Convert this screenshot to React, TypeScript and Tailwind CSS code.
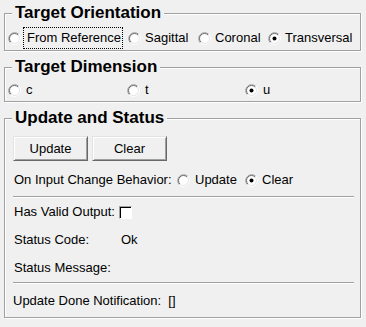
import React from 'react'

const Radio = ({ checked = false }: { checked?: boolean }) => (
  <svg width="13" height="13" viewBox="0 0 13 13" className="shrink-0">
    <circle cx="6.5" cy="6.5" r="6" fill="#fff" />
    <path d="M2.26 10.74 A6 6 0 0 1 10.74 2.26" fill="none" stroke="#a0a0a0" />
    <path d="M2.96 10.04 A5 5 0 0 1 10.04 2.96" fill="none" stroke="#696969" />
    <path d="M10.74 2.26 A6 6 0 0 1 2.26 10.74" fill="none" stroke="#fff" />
    <path d="M10.04 2.96 A5 5 0 0 1 2.96 10.04" fill="none" stroke="#e3e3e3" />
    {checked && <circle cx="6.5" cy="6.5" r="2" fill="#000" />}
  </svg>
)

const GroupBox = ({ title, children }: { title: string; children: React.ReactNode }) => (
  <fieldset className="m-0 p-0 min-w-0 border border-[#a0a0a0] shadow-[inset_1px_1px_0_#fff,1px_1px_0_#fff]">
    <legend className="ml-[7px] px-[3px] bg-[#f0f0f0] text-[17px] leading-[20px] font-bold">{title}</legend>
    {children}
  </fieldset>
)

const Button = ({ label }: { label: string }) => (
  <button className="w-[75px] h-[25px] bg-[#f0f0f0] border border-t-[#e3e3e3] border-l-[#e3e3e3] border-r-[#696969] border-b-[#696969] shadow-[inset_1px_1px_0_#fff,inset_-1px_-1px_0_#a0a0a0] text-[13px] leading-none">
    {label}
  </button>
)

const Separator = ({ className }: { className: string }) => (
  <div className={`h-px bg-[#a0a0a0] shadow-[0_1px_0_#fff] ${className}`} />
)

export default function App() {
  return (
    <div className="w-[366px] h-[327px] bg-[#f0f0f0] pt-[3px] pl-[4px] pr-[5px] text-[13px] text-black font-['Liberation_Sans',Arial,sans-serif] flex flex-col gap-[6px]">
      <GroupBox title="Target Orientation">
        <div className="pt-[4px] pb-[1px] pl-[3px] flex items-center h-[27px]">
          <div className="w-[120px] flex items-center">
            <Radio />
            <span className="ml-[2px] h-[22px] leading-[20px] border border-dotted border-black pl-[3px] pr-[1px]">From Reference</span>
          </div>
          <div className="w-[70px] flex items-center">
            <Radio />
            <span className="ml-[4px]">Sagittal</span>
          </div>
          <div className="w-[70px] flex items-center">
            <Radio />
            <span className="ml-[4px]">Coronal</span>
          </div>
          <div className="flex items-center">
            <Radio checked />
            <span className="ml-[4px]">Transversal</span>
          </div>
        </div>
      </GroupBox>

      <GroupBox title="Target Dimension">
        <div className="pt-[3px] pb-[1px] pl-[3px]">
          <div className="grid grid-cols-[119px_118px_1fr] h-[20px] items-center">
            <div className="flex items-center">
              <Radio />
              <span className="ml-[5px]">c</span>
            </div>
            <div className="flex items-center">
              <Radio />
              <span className="ml-[5px]">t</span>
            </div>
            <div className="flex items-center">
              <Radio checked />
              <span className="ml-[5px]">u</span>
            </div>
          </div>
        </div>
      </GroupBox>

      <GroupBox title="Update and Status">
        <div className="pt-[8px] pl-[8px] pr-[6px] pb-[6px] flex flex-col">
          <div className="flex gap-[4px]">
            <Button label="Update" />
            <Button label="Clear" />
          </div>

          <div className="mt-[9px] h-[20px] pl-[1px] flex items-center">
            <span className="w-[163px] shrink-0 whitespace-nowrap">On Input Change Behavior:</span>
            <div className="w-[68px] flex items-center">
              <Radio />
              <span className="ml-[5px]">Update</span>
            </div>
            <div className="flex items-center">
              <Radio checked />
              <span className="ml-[4px]">Clear</span>
            </div>
          </div>

          <Separator className="mt-[6px]" />

          <div className="mt-[5px] pl-[1px] grid grid-cols-[105px_1fr] grid-rows-[20px_20px_20px] gap-y-[8px]">
            <span className="flex items-center whitespace-nowrap">Has Valid Output:</span>
            <div className="flex items-center">
              <span className="w-[13px] h-[13px] bg-white border border-t-[#a0a0a0] border-l-[#a0a0a0] border-r-white border-b-white shadow-[inset_1px_1px_0_#000]" />
            </div>
            <span className="flex items-center">Status Code:</span>
            <span className="flex items-center ml-[2px]">Ok</span>
            <span className="flex items-center -mt-[1px]">Status Message:</span>
            <span />
          </div>

          <Separator className="mt-[4px]" />

          <div className="mt-[8px] h-[20px] flex items-center whitespace-nowrap">
            Update Done Notification:&nbsp; []
          </div>
        </div>
      </GroupBox>
    </div>
  )
}
